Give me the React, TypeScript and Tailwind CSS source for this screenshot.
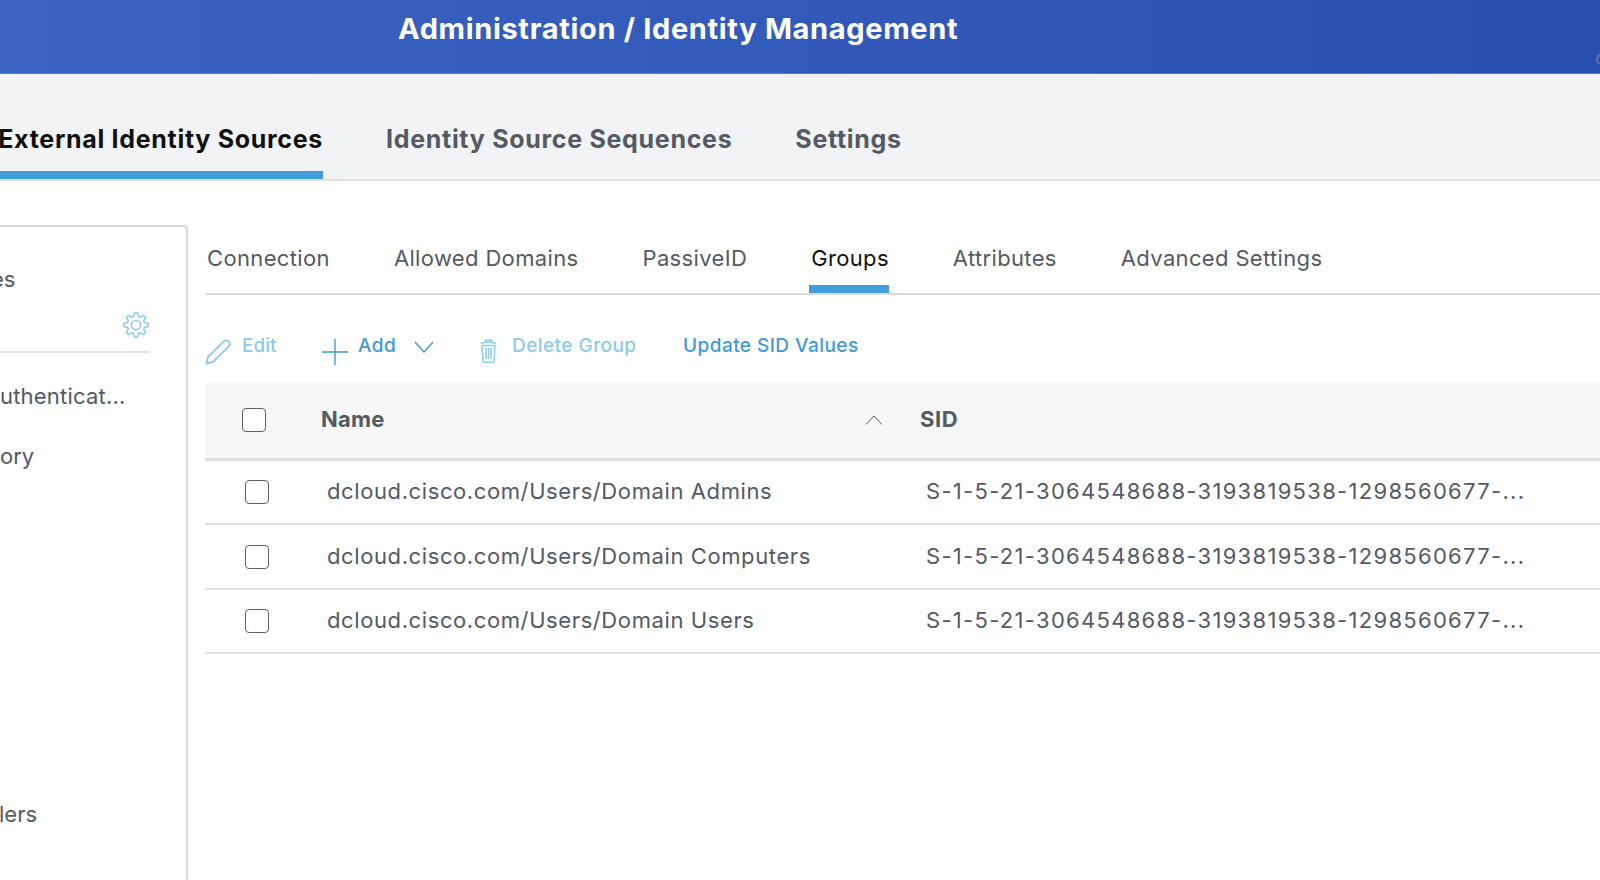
import React from "react";

const subTabs = ["Connection", "Allowed Domains", "PassiveID", "Groups", "Attributes", "Advanced Settings"];

const groups = [
  "dcloud.cisco.com/Users/Domain Admins",
  "dcloud.cisco.com/Users/Domain Computers",
  "dcloud.cisco.com/Users/Domain Users",
];

// Engrane de 8 dientes
const gearPath = () => {
  const cx = 14;
  const cy = 14;
  const teeth = 8;
  const parts: string[] = [];
  for (let i = 0; i < teeth; i++) {
    const a = (i * 2 * Math.PI) / teeth - Math.PI / 2;
    const step = (2 * Math.PI) / teeth;
    const pts: [number, number][] = [
      [8.8, a - step * 0.36],
      [12.2, a - step * 0.16],
      [12.2, a + step * 0.16],
      [8.8, a + step * 0.36],
    ];
    pts.forEach(([r, t], j) => {
      const x = (cx + r * Math.cos(t)).toFixed(2);
      const y = (cy + r * Math.sin(t)).toFixed(2);
      parts.push(`${i === 0 && j === 0 ? "M" : "L"}${x} ${y}`);
    });
  }
  return parts.join(" ") + " Z";
};

const App: React.FC = () => {
  return (
    <div className="w-[1600px] h-[880px] overflow-hidden bg-white flex flex-col font-['Inter',sans-serif] text-[#545a63]">
      {/* Barra superior */}
      <header className="relative overflow-hidden h-[74px] shrink-0 pl-[398px] flex items-center pb-[15px] bg-gradient-to-r from-[#3b63c4] to-[#2950b0] border-b border-[#4a7fd6]">
        <h1 className="text-[29px] font-bold tracking-[0.66px] text-white whitespace-nowrap">Administration / Identity Management</h1>
        <span className="absolute right-[-7px] top-[54px] w-[11px] h-[11px] rounded-full border-2 border-[#64749f]" />
      </header>

      {/* Tabs principales */}
      <nav className="h-[107px] shrink-0 bg-[#f2f3f5] border-b-2 border-[#dfe0e2] flex items-end">
        <div className="w-[323px] h-full flex items-end justify-end border-b-[8px] border-[#429dd8] overflow-hidden">
          <span className="text-[25px] font-bold tracking-[0.7px] text-[#111] whitespace-nowrap pb-[13px]">External Identity Sources</span>
        </div>
        <span className="ml-[63px] text-[25px] font-bold tracking-[0.7px] whitespace-nowrap pb-[21px]">Identity Source Sequences</span>
        <span className="ml-[63px] text-[25px] font-bold tracking-[0.7px] whitespace-nowrap pb-[21px]">Settings</span>
      </nav>

      <div className="flex-1 flex pt-[44px]">
        {/* Panel izquierdo */}
        <aside className="w-[188px] shrink-0 border-t-2 border-r-2 border-[#d8d8d8] rounded-tr text-[22px] whitespace-nowrap flex flex-col overflow-hidden">
          <div className="h-[126px] w-[149px] border-b-2 border-[#e3e3e3] pt-[36px] relative">
            <div className="-ml-[9px]">es</div>
            <svg className="absolute right-[-1px] top-[84px]" width="28" height="28" viewBox="0 0 28 28" fill="none" stroke="#7cc4ea" strokeWidth="1.3" strokeLinejoin="round">
              <path d={gearPath()} />
              <circle cx="14" cy="14" r="4.6" />
            </svg>
          </div>
          <div className="mt-[27px] tracking-[0.2px]">uthenticat...</div>
          <div className="mt-[27px]">ory</div>
          <div className="mt-[325px] -ml-px">lers</div>
        </aside>

        {/* Contenido */}
        <main className="flex-1 pl-[17px] min-w-0">
          <div className="h-[70px] border-b-2 border-[#dcdcdc] flex items-end">
            {subTabs.map((tab) => (
              <div
                key={tab}
                className={`mr-[62px] h-full flex items-center pt-[6px] pl-[2px] text-[22px] tracking-[0.35px] whitespace-nowrap border-b-[8px] ${
                  tab === "Groups" ? "border-[#429dd8] text-[#111]" : "border-transparent"
                }`}
              >
                {tab}
              </div>
            ))}
          </div>

          {/* Acciones */}
          <div className="h-[88px] flex items-start pt-[37px] text-[19px] leading-[28px] font-medium tracking-[0.45px]">
            <div className="flex items-start text-[#8ccbec] w-[116px]">
              <svg className="mt-[7px]" width="26" height="26" viewBox="0 0 26 26" fill="none" stroke="currentColor" strokeWidth="1.8" strokeLinejoin="round">
                <path d="M1.5 24.5 L3 18 L19 2.2 Q21.5 0.5 24 2.5 Q25.8 5 24 7.2 L8 23 Z" />
              </svg>
              <span className="ml-[11px] tracking-normal">Edit</span>
            </div>
            <div className="flex items-start text-[#3f9ad6] w-[159px]">
              <svg className="mt-[6px]" width="28" height="28" viewBox="0 0 28 28" fill="none" stroke="currentColor" strokeWidth="1.4">
                <path d="M14 1 V27 M1 14 H27" />
              </svg>
              <span className="ml-[9px]">Add</span>
              <svg className="ml-[18px] mt-[9px]" width="20" height="12" viewBox="0 0 20 12" fill="none" stroke="currentColor" strokeWidth="1.3">
                <path d="M1 1 L10 11 L19 1" />
              </svg>
            </div>
            <div className="flex items-start text-[#8ccbec] w-[203px]">
              <svg className="mt-[7px]" width="17" height="24" viewBox="0 0 17 24" fill="none" stroke="currentColor" strokeWidth="1.5">
                <path d="M5.5 3 V1.2 H11.5 V3 M0.7 4.5 Q8.5 1.8 16.3 4.5 M2 6.5 L3 22 Q3.1 23.3 4.4 23.3 H12.6 Q13.9 23.3 14 22 L15 6.5 Z M6 9 V20 M8.5 9 V20 M11 9 V20" />
              </svg>
              <span className="ml-[15px]">Delete Group</span>
            </div>
            <span className="text-[#3f9ad6]">Update SID Values</span>
          </div>

          {/* Tabla */}
          <div className="h-[78px] pb-[2px] bg-[#f7f7f7] border-b-[3px] border-[#e1e1e1] flex items-center text-[22px] font-bold tracking-[0.25px]">
            <div className="w-[37px] shrink-0" />
            <div className="w-[24px] h-[24px] border-[1.5px] border-[#5b6068] rounded-[4px] bg-white shrink-0" />
            <div className="ml-[55px] w-[544px]">Name</div>
            <svg width="18" height="10" viewBox="0 0 18 10" fill="none" stroke="#545a63" strokeWidth="1">
              <path d="M1 9.5 L9 1 L17 9.5" />
            </svg>
            <div className="ml-[37px] tracking-[0.6px]">SID</div>
          </div>
          {groups.map((group) => (
            <div key={group} className="h-[64.4px] border-b-2 border-[#e1e1e1] flex items-center text-[22px]">
              <div className="w-[40px] shrink-0" />
              <div className="w-[24px] h-[24px] border-[1.5px] border-[#5b6068] rounded-[4px] bg-white shrink-0" />
              <div className="ml-[58px] w-[599px] whitespace-nowrap tracking-[0.6px] pb-[1px]">{group}</div>
              <div className="whitespace-nowrap tracking-[1.3px] pb-[1px]">S-1-5-21-3064548688-3193819538-1298560677-...</div>
            </div>
          ))}
        </main>
      </div>
    </div>
  );
};

export default App;
